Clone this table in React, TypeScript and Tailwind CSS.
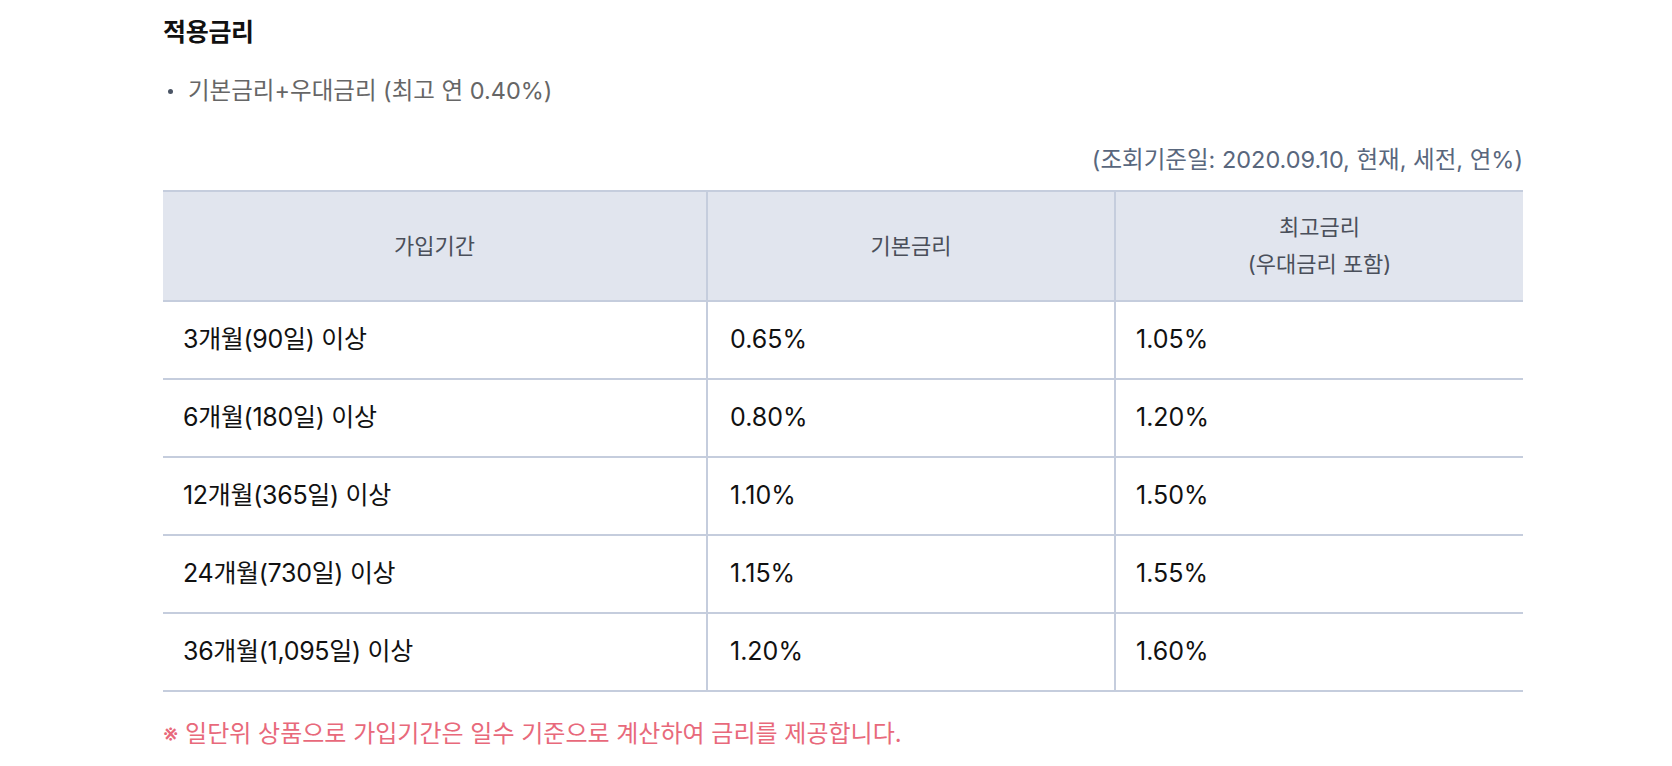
const rows = [
  { period: "3개월(90일) 이상", base: "0.65%", max: "1.05%" },
  { period: "6개월(180일) 이상", base: "0.80%", max: "1.20%" },
  { period: "12개월(365일) 이상", base: "1.10%", max: "1.50%" },
  { period: "24개월(730일) 이상", base: "1.15%", max: "1.55%" },
  { period: "36개월(1,095일) 이상", base: "1.20%", max: "1.60%" },
];

export default function App() {
  return (
    <div
      className="min-h-[766px] bg-white pl-[163px] pt-[17px]"
      style={{ fontFamily: 'Inter, "Noto Sans CJK KR", sans-serif' }}
    >
      <div className="w-[1360px]">
        {/* Title */}
        <h2 className="text-[25px] font-bold leading-[30px] tracking-[-0.3px] text-[#111]">
          적용금리
        </h2>

        {/* Bullet */}
        <ul className="mt-[30px]">
          <li className="flex items-center text-[23.5px] leading-[28px] text-[#666]">
            <span className="ml-[5px] mr-[15px] h-[5px] w-[5px] rounded-full bg-[#4b5565]" />
            기본금리+우대금리 (최고 연 0.40%)
          </li>
        </ul>

        {/* Reference date */}
        <p className="mt-[41px] text-right text-[23.5px] leading-[28px] text-[#59677d]">
          (조회기준일: 2020.09.10, 현재, 세전, 연%)
        </p>

        {/* Rate table */}
        <table className="mt-[16px] w-full table-fixed border-collapse text-[25px]">
          <colgroup>
            <col className="w-[40%]" />
            <col className="w-[30%]" />
            <col className="w-[30%]" />
          </colgroup>
          <thead>
            <tr className="h-[110px] border-y-2 border-[#c5cddd] bg-[#e1e5ee] text-[22px] text-[#4a4f5a]">
              <th className="font-normal">가입기간</th>
              <th className="border-l-2 border-[#c5cddd] font-normal">기본금리</th>
              <th className="border-l-2 border-[#c5cddd] font-normal leading-[37px]">
                최고금리
                <br />
                (우대금리 포함)
              </th>
            </tr>
          </thead>
          <tbody>
            {rows.map((row) => (
              <tr key={row.period} className="h-[78px] border-b-2 border-[#c5cddd] text-[#111]">
                <td className="pl-[20px] tracking-[-0.3px]">{row.period}</td>
                <td className="border-l-2 border-[#c5cddd] pl-[22px]">{row.base}</td>
                <td className="border-l-2 border-[#c5cddd] pl-[20px]">{row.max}</td>
              </tr>
            ))}
          </tbody>
        </table>

        {/* Note */}
        <p className="mt-[28px] text-[24px] leading-[28px] text-[#e8697b]">
          ※ 일단위 상품으로 가입기간은 일수 기준으로 계산하여 금리를 제공합니다.
        </p>
      </div>
    </div>
  );
}
